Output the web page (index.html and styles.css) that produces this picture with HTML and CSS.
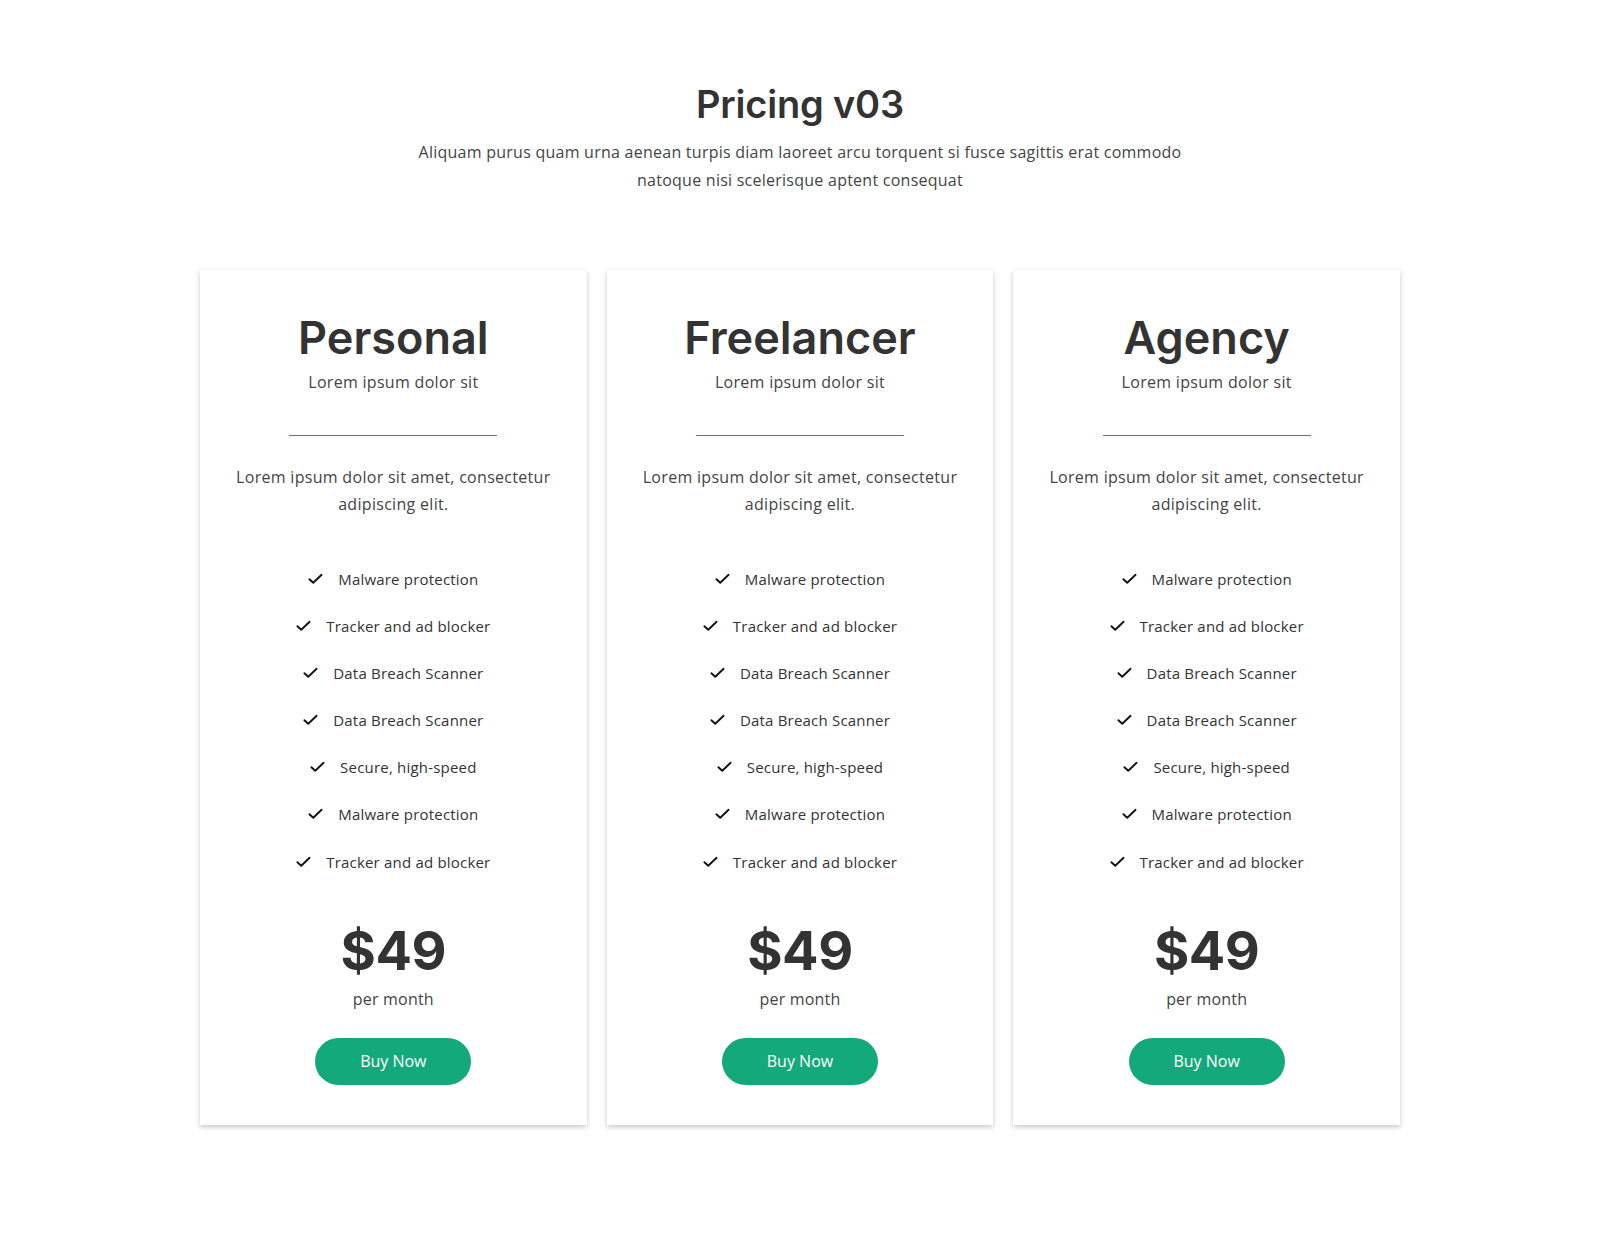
FILE: index.html
```html
<!DOCTYPE html>
<html lang="en">
<head>
<meta charset="utf-8">
<title>Pricing v03</title>
<link rel="stylesheet" href="styles.css">
</head>
<body>
<section class="pricing">
  <header class="pricing-head">
    <h1 class="pricing-title">Pricing v03</h1>
    <p class="pricing-lead">Aliquam purus quam urna aenean turpis diam laoreet arcu torquent si fusce sagittis erat commodo natoque nisi scelerisque aptent consequat</p>
  </header>
  <div class="plans">
    <article class="plan">
      <h2 class="plan-name">Personal</h2>
      <p class="plan-tag">Lorem ipsum dolor sit</p>
      <div class="plan-rule"></div>
      <p class="plan-desc">Lorem ipsum dolor sit amet, consectetur adipiscing elit.</p>
      <ul class="features">
        <li class="feature"><svg class="check" viewBox="0 0 16 12"><path d="M1.5 6.2 L5.6 10 L14.5 1.5"/></svg><span>Malware protection</span></li>
        <li class="feature"><svg class="check" viewBox="0 0 16 12"><path d="M1.5 6.2 L5.6 10 L14.5 1.5"/></svg><span>Tracker and ad blocker</span></li>
        <li class="feature"><svg class="check" viewBox="0 0 16 12"><path d="M1.5 6.2 L5.6 10 L14.5 1.5"/></svg><span>Data Breach Scanner</span></li>
        <li class="feature"><svg class="check" viewBox="0 0 16 12"><path d="M1.5 6.2 L5.6 10 L14.5 1.5"/></svg><span>Data Breach Scanner</span></li>
        <li class="feature"><svg class="check" viewBox="0 0 16 12"><path d="M1.5 6.2 L5.6 10 L14.5 1.5"/></svg><span>Secure, high-speed</span></li>
        <li class="feature"><svg class="check" viewBox="0 0 16 12"><path d="M1.5 6.2 L5.6 10 L14.5 1.5"/></svg><span>Malware protection</span></li>
        <li class="feature"><svg class="check" viewBox="0 0 16 12"><path d="M1.5 6.2 L5.6 10 L14.5 1.5"/></svg><span>Tracker and ad blocker</span></li>
      </ul>
      <div class="price">$49</div>
      <div class="period">per month</div>
      <a class="buy" href="#">Buy Now</a>
    </article>
    <article class="plan">
      <h2 class="plan-name">Freelancer</h2>
      <p class="plan-tag">Lorem ipsum dolor sit</p>
      <div class="plan-rule"></div>
      <p class="plan-desc">Lorem ipsum dolor sit amet, consectetur adipiscing elit.</p>
      <ul class="features">
        <li class="feature"><svg class="check" viewBox="0 0 16 12"><path d="M1.5 6.2 L5.6 10 L14.5 1.5"/></svg><span>Malware protection</span></li>
        <li class="feature"><svg class="check" viewBox="0 0 16 12"><path d="M1.5 6.2 L5.6 10 L14.5 1.5"/></svg><span>Tracker and ad blocker</span></li>
        <li class="feature"><svg class="check" viewBox="0 0 16 12"><path d="M1.5 6.2 L5.6 10 L14.5 1.5"/></svg><span>Data Breach Scanner</span></li>
        <li class="feature"><svg class="check" viewBox="0 0 16 12"><path d="M1.5 6.2 L5.6 10 L14.5 1.5"/></svg><span>Data Breach Scanner</span></li>
        <li class="feature"><svg class="check" viewBox="0 0 16 12"><path d="M1.5 6.2 L5.6 10 L14.5 1.5"/></svg><span>Secure, high-speed</span></li>
        <li class="feature"><svg class="check" viewBox="0 0 16 12"><path d="M1.5 6.2 L5.6 10 L14.5 1.5"/></svg><span>Malware protection</span></li>
        <li class="feature"><svg class="check" viewBox="0 0 16 12"><path d="M1.5 6.2 L5.6 10 L14.5 1.5"/></svg><span>Tracker and ad blocker</span></li>
      </ul>
      <div class="price">$49</div>
      <div class="period">per month</div>
      <a class="buy" href="#">Buy Now</a>
    </article>
    <article class="plan">
      <h2 class="plan-name">Agency</h2>
      <p class="plan-tag">Lorem ipsum dolor sit</p>
      <div class="plan-rule"></div>
      <p class="plan-desc">Lorem ipsum dolor sit amet, consectetur adipiscing elit.</p>
      <ul class="features">
        <li class="feature"><svg class="check" viewBox="0 0 16 12"><path d="M1.5 6.2 L5.6 10 L14.5 1.5"/></svg><span>Malware protection</span></li>
        <li class="feature"><svg class="check" viewBox="0 0 16 12"><path d="M1.5 6.2 L5.6 10 L14.5 1.5"/></svg><span>Tracker and ad blocker</span></li>
        <li class="feature"><svg class="check" viewBox="0 0 16 12"><path d="M1.5 6.2 L5.6 10 L14.5 1.5"/></svg><span>Data Breach Scanner</span></li>
        <li class="feature"><svg class="check" viewBox="0 0 16 12"><path d="M1.5 6.2 L5.6 10 L14.5 1.5"/></svg><span>Data Breach Scanner</span></li>
        <li class="feature"><svg class="check" viewBox="0 0 16 12"><path d="M1.5 6.2 L5.6 10 L14.5 1.5"/></svg><span>Secure, high-speed</span></li>
        <li class="feature"><svg class="check" viewBox="0 0 16 12"><path d="M1.5 6.2 L5.6 10 L14.5 1.5"/></svg><span>Malware protection</span></li>
        <li class="feature"><svg class="check" viewBox="0 0 16 12"><path d="M1.5 6.2 L5.6 10 L14.5 1.5"/></svg><span>Tracker and ad blocker</span></li>
      </ul>
      <div class="price">$49</div>
      <div class="period">per month</div>
      <a class="buy" href="#">Buy Now</a>
    </article>
  </div>
</section>
</body>
</html>
```

FILE: styles.css
```css
* { box-sizing: border-box; }

body {
  margin: 0;
  background: #fff;
  font-family: "Open Sans", "Noto Sans", sans-serif;
  color: #444;
}

.pricing {
  width: 1200px;
  margin: 0 auto;
  padding: 80px 0 110px;
}

.pricing-head {
  text-align: center;
}

.pricing-title {
  margin: 0;
  font-family: Inter, "Noto Sans", sans-serif;
  font-weight: 600;
  font-size: 38px;
  line-height: 48px;
  color: #333;
  letter-spacing: -0.2px;
}

.pricing-lead {
  margin: 10px auto 0;
  max-width: 800px;
  font-size: 16px;
  line-height: 28px;
  color: #444;
  letter-spacing: 0.25px;
}

.plans {
  margin-top: 76px;
  display: grid;
  grid-template-columns: repeat(3, 1fr);
  gap: 20px;
}

.plan {
  background: #fff;
  box-shadow: 0 2px 5px rgba(0, 0, 0, 0.22);
  padding: 42px 20px 40px;
  text-align: center;
  display: flex;
  flex-direction: column;
  align-items: center;
}

.plan-name {
  margin: 0;
  font-family: Inter, "Noto Sans", sans-serif;
  font-weight: 600;
  font-size: 45px;
  line-height: 52px;
  color: #333;
  letter-spacing: 0;
}

.plan-tag {
  margin: 6px 0 0;
  font-size: 16px;
  line-height: 24px;
  color: #444;
  letter-spacing: 0.3px;
}

.plan-rule {
  margin-top: 41px;
  width: 208px;
  height: 1px;
  background: #1f9b78;
}

.plan-desc {
  margin: 28px 0 0;
  width: 340px;
  font-size: 16px;
  line-height: 27px;
  color: #444;
  letter-spacing: 0.3px;
}

.features {
  list-style: none;
  margin: 49px 0 0;
  padding: 0;
  display: flex;
  flex-direction: column;
  align-items: center;
  gap: 23.1px;
}

.feature {
  display: flex;
  align-items: center;
  gap: 15px;
  font-size: 15px;
  line-height: 24px;
  color: #333;
  letter-spacing: 0.2px;
}

.check {
  width: 15px;
  height: 12px;
  fill: none;
  stroke: #111;
  stroke-width: 2;
  stroke-linecap: round;
  stroke-linejoin: round;
}

.price {
  margin-top: 42px;
  font-family: Inter, "Noto Sans", sans-serif;
  font-weight: 700;
  font-size: 54px;
  line-height: 70px;
  color: #333;
  letter-spacing: -0.5px;
}

.period {
  margin-top: 1px;
  font-size: 16px;
  line-height: 24px;
  color: #444;
  letter-spacing: 0.2px;
}

.buy {
  margin-top: 27px;
  display: flex;
  align-items: center;
  justify-content: center;
  width: 156px;
  height: 47px;
  border-radius: 24px;
  background: #14a97b;
  color: #fff;
  text-decoration: none;
  font-size: 16px;
}
```
